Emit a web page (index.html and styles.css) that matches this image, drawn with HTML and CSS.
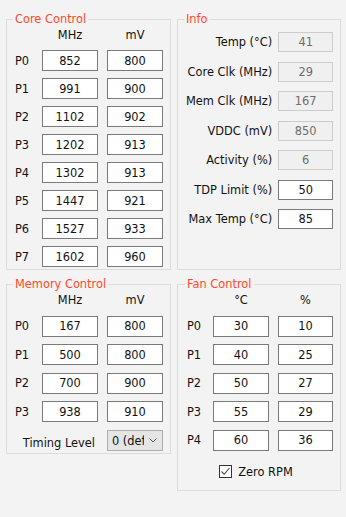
FILE: index.html
```html
<!DOCTYPE html>
<html lang="en">
<head>
    <meta charset="UTF-8">
    <meta name="viewport" content="width=device-width, initial-scale=1.0">
    <title>Overdrive Settings</title>
    <link rel="stylesheet" href="styles.css">
</head>
<body>
    <div class="panel">
        <fieldset class="group core">
            <legend>Core Control</legend>
            <div class="states">
                <span></span><span class="head">MHz</span><span class="head">mV</span>
                <span class="state">P0</span><input class="cell" value="852"><input class="cell" value="800">
                <span class="state">P1</span><input class="cell" value="991"><input class="cell" value="900">
                <span class="state">P2</span><input class="cell" value="1102"><input class="cell" value="902">
                <span class="state">P3</span><input class="cell" value="1202"><input class="cell" value="913">
                <span class="state">P4</span><input class="cell" value="1302"><input class="cell" value="913">
                <span class="state">P5</span><input class="cell" value="1447"><input class="cell" value="921">
                <span class="state">P6</span><input class="cell" value="1527"><input class="cell" value="933">
                <span class="state">P7</span><input class="cell" value="1602"><input class="cell" value="960">
            </div>
        </fieldset>

        <fieldset class="group info">
            <legend>Info</legend>
            <div class="readings">
                <span class="name">Temp (°C)</span><input class="cell ro" value="41" readonly>
                <span class="name">Core Clk (MHz)</span><input class="cell ro" value="29" readonly>
                <span class="name">Mem Clk (MHz)</span><input class="cell ro" value="167" readonly>
                <span class="name">VDDC (mV)</span><input class="cell ro" value="850" readonly>
                <span class="name">Activity (%)</span><input class="cell ro" value="6" readonly>
                <span class="name">TDP Limit (%)</span><input class="cell" value="50">
                <span class="name">Max Temp (°C)</span><input class="cell" value="85">
            </div>
        </fieldset>

        <fieldset class="group memory">
            <legend>Memory Control</legend>
            <div class="states wide">
                <span></span><span class="head">MHz</span><span class="head">mV</span>
                <span class="state">P0</span><input class="cell" value="167"><input class="cell" value="800">
                <span class="state">P1</span><input class="cell" value="500"><input class="cell" value="800">
                <span class="state">P2</span><input class="cell" value="700"><input class="cell" value="900">
                <span class="state">P3</span><input class="cell" value="938"><input class="cell" value="910">
                <span class="timing-label">Timing Level</span>
                <div class="select">
                    <span class="select-value">0 (default)</span>
                    <svg width="8" height="5" viewBox="0 0 8 5"><path d="M0.5 0.5 L4 4 L7.5 0.5" fill="none" stroke="#555" stroke-width="1"/></svg>
                </div>
            </div>
        </fieldset>

        <fieldset class="group fan">
            <legend>Fan Control</legend>
            <div class="states wide">
                <span></span><span class="head">°C</span><span class="head">%</span>
                <span class="state">P0</span><input class="cell" value="30"><input class="cell" value="10">
                <span class="state">P1</span><input class="cell" value="40"><input class="cell" value="25">
                <span class="state">P2</span><input class="cell" value="50"><input class="cell" value="27">
                <span class="state">P3</span><input class="cell" value="55"><input class="cell" value="29">
                <span class="state">P4</span><input class="cell" value="60"><input class="cell" value="36">
            </div>
            <label class="check">
                <span class="box"><svg width="11" height="11" viewBox="0 0 11 11"><path d="M1.5 5.5 L4.2 8.3 L9.5 2" fill="none" stroke="#444" stroke-width="1.1"/></svg></span>
                Zero RPM
            </label>
        </fieldset>
    </div>
</body>
</html>
```

FILE: styles.css
```css
body {
    margin: 0;
    padding: 12px 5px 0 6px;
    background-color: #f3f3f3;
    font-family: "DejaVu Sans", Verdana, sans-serif;
    font-size: 11.4px;
    line-height: 14px;
    color: #111;
}
.panel {
    display: grid;
    grid-template-columns: 165px 164px;
    column-gap: 6px;
    row-gap: 7px;
    align-items: start;
}
.group {
    margin: 0;
    min-width: 0;
    border: 1px solid #dcdcdc;
    padding: 2px 7px 2px 8px;
}
.group legend {
    padding: 0 2px;
    margin-left: -2px;
    line-height: 14px;
    color: #ff4a2a;
}
.core, .info {
    align-self: stretch;
}
.info {
    padding-top: 6px;
}
.fan {
    padding: 2px 7px 11px 9px;
}
.states {
    display: grid;
    grid-template-columns: 18px 56px 56px;
    grid-auto-rows: 21px;
    grid-template-rows: 15px;
    column-gap: 9px;
    row-gap: 7px;
    align-items: center;
}
.states.wide {
    row-gap: 7.5px;
}
.fan .states {
    grid-template-columns: 17px 56px 55px;
}
.head {
    align-self: start;
    text-align: center;
}
.state {
    white-space: nowrap;
}
.cell {
    box-sizing: border-box;
    width: 100%;
    height: 21px;
    margin: 0;
    padding: 0;
    border: 1px solid #7a7a7a;
    background: #fff;
    font: inherit;
    color: #111;
    text-align: center;
    outline: none;
}
.readings {
    display: grid;
    grid-template-columns: 1fr 55px;
    grid-auto-rows: 20px;
    column-gap: 6px;
    row-gap: 9.5px;
    align-items: center;
}
.readings .cell {
    height: 20px;
}
.name {
    text-align: right;
    white-space: nowrap;
}
.cell.ro {
    background: #f0f0f0;
    border-color: #cccccc;
    color: #6d6d6d;
}
.timing-label {
    grid-column: 1 / 3;
    margin-top: 5.5px;
    padding-right: 3px;
    text-align: right;
    white-space: nowrap;
}
.select {
    box-sizing: border-box;
    height: 21px;
    margin-top: 5.5px;
    margin-bottom: 4px;
    display: flex;
    align-items: center;
    padding-left: 4px;
    border: 1px solid #adadad;
    background: #e5e5e5;
}
.select-value {
    width: 32px;
    overflow: hidden;
    white-space: nowrap;
}
.select svg {
    margin-left: auto;
    margin-right: 5px;
}
.check {
    display: flex;
    align-items: center;
    justify-content: center;
    gap: 6px;
    margin-top: 14px;
    padding-right: 8px;
}
.box {
    box-sizing: border-box;
    width: 13px;
    height: 13px;
    border: 1px solid #333;
    background: #fff;
    display: flex;
    align-items: center;
    justify-content: center;
}
```
